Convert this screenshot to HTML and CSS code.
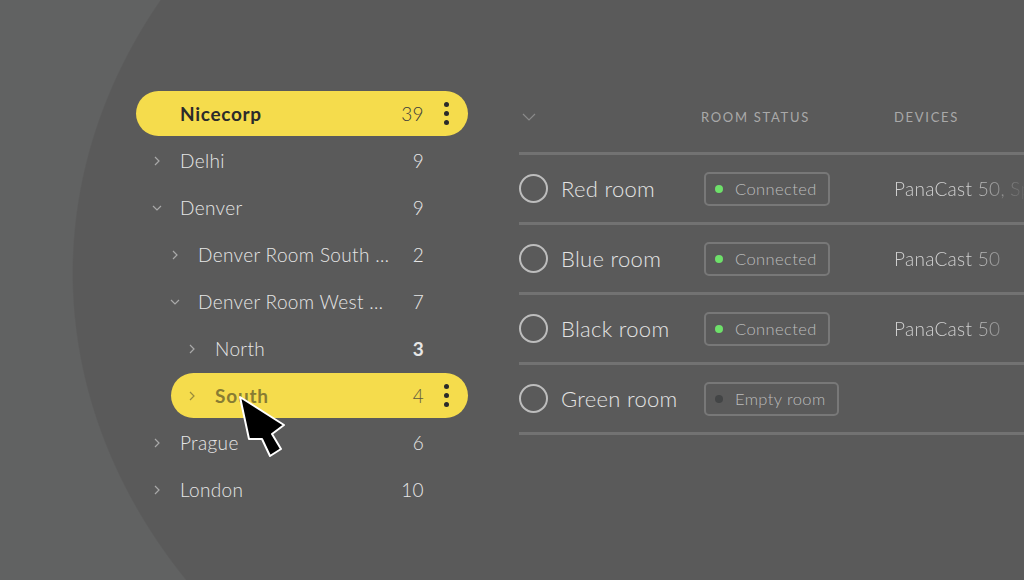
FILE: index.html
```html
<!DOCTYPE html>
<html lang="en">
<head>
    <meta charset="UTF-8">
    <meta name="viewport" content="width=device-width, initial-scale=1.0">
    <title>Rooms</title>
    <link rel="stylesheet" href="styles.css">
</head>
<body>
    <div class="page">
        <nav class="tree">
            <div class="node level-0 selected root">
                <span class="chev"></span>
                <span class="name">Nicecorp</span>
                <span class="count">39</span>
                <span class="more"><i></i><i></i><i></i></span>
            </div>
            <div class="node level-0">
                <span class="chev"><svg width="6" height="10" viewBox="0 0 6 10"><path d="M1 1l4 4-4 4"/></svg></span>
                <span class="name">Delhi</span>
                <span class="count">9</span>
                <span class="more"></span>
            </div>
            <div class="node level-0">
                <span class="chev"><svg width="10" height="6" viewBox="0 0 10 6"><path d="M1 1l4 4 4-4"/></svg></span>
                <span class="name">Denver</span>
                <span class="count">9</span>
                <span class="more"></span>
            </div>
            <div class="node level-1">
                <span class="chev"><svg width="6" height="10" viewBox="0 0 6 10"><path d="M1 1l4 4-4 4"/></svg></span>
                <span class="name">Denver Room South …</span>
                <span class="count">2</span>
                <span class="more"></span>
            </div>
            <div class="node level-1">
                <span class="chev"><svg width="10" height="6" viewBox="0 0 10 6"><path d="M1 1l4 4 4-4"/></svg></span>
                <span class="name">Denver Room West …</span>
                <span class="count">7</span>
                <span class="more"></span>
            </div>
            <div class="node level-2">
                <span class="chev"><svg width="6" height="10" viewBox="0 0 6 10"><path d="M1 1l4 4-4 4"/></svg></span>
                <span class="name">North</span>
                <span class="count strong">3</span>
                <span class="more"></span>
            </div>
            <div class="node level-2 selected hover">
                <span class="chev"><svg width="6" height="10" viewBox="0 0 6 10"><path d="M1 1l4 4-4 4"/></svg></span>
                <span class="name">South</span>
                <span class="count">4</span>
                <span class="more"><i></i><i></i><i></i></span>
            </div>
            <div class="node level-0">
                <span class="chev"><svg width="6" height="10" viewBox="0 0 6 10"><path d="M1 1l4 4-4 4"/></svg></span>
                <span class="name">Prague</span>
                <span class="count">6</span>
                <span class="more"></span>
            </div>
            <div class="node level-0">
                <span class="chev"><svg width="6" height="10" viewBox="0 0 6 10"><path d="M1 1l4 4-4 4"/></svg></span>
                <span class="name">London</span>
                <span class="count">10</span>
                <span class="more"></span>
            </div>
        </nav>

        <section class="rooms">
            <div class="rooms-head">
                <div class="col-name"><svg width="14" height="8" viewBox="0 0 14 8"><path d="M1 1l6 6 6-6"/></svg></div>
                <div class="col-status">ROOM STATUS</div>
                <div class="col-devices">DEVICES</div>
            </div>
            <div class="room">
                <div class="col-name"><span class="radio"></span>Red room</div>
                <div class="col-status"><span class="badge"><span class="dot on"></span>Connected</span></div>
                <div class="col-devices">PanaCast 50, Speak 750</div>
            </div>
            <div class="room">
                <div class="col-name"><span class="radio"></span>Blue room</div>
                <div class="col-status"><span class="badge"><span class="dot on"></span>Connected</span></div>
                <div class="col-devices">PanaCast 50</div>
            </div>
            <div class="room">
                <div class="col-name"><span class="radio"></span>Black room</div>
                <div class="col-status"><span class="badge"><span class="dot on"></span>Connected</span></div>
                <div class="col-devices">PanaCast 50</div>
            </div>
            <div class="room">
                <div class="col-name"><span class="radio"></span>Green room</div>
                <div class="col-status"><span class="badge"><span class="dot"></span>Empty room</span></div>
                <div class="col-devices"></div>
            </div>
        </section>

        <!-- mouse pointer over the South node -->
        <svg class="cursor" width="52" height="68" viewBox="-4 -4 52 68">
            <path d="M0 0L9 42L22 42L30 59L41 52L32 37L44 28Z"/>
        </svg>
    </div>
</body>
</html>
```

FILE: styles.css
```css
body {
    margin: 0;
    width: 1024px;
    height: 580px;
    overflow: hidden;
    font-family: Lato, "Open Sans", sans-serif;
    font-weight: 300;
    color: #e6e6e6;
    background: #616262 radial-gradient(ellipse 700px 563px at 772px 273px, #5a5a5a 99.8%, transparent 100%);
}
.page {
    position: relative;
    display: flex;
    align-items: flex-start;
    gap: 51px;
    padding: 91px 0 0 136px;
}

/* Location tree */
.tree {
    width: 332px;
    flex: none;
    display: flex;
    flex-direction: column;
    gap: 2px;
}
.node {
    display: flex;
    align-items: center;
    height: 45px;
    padding-left: 14px;
    border-radius: 23px;
    font-size: 19px;
    letter-spacing: 0.35px;
}
.node.level-1 {
    margin-left: 18px;
}
.node.level-2 {
    margin-left: 35px;
}
.chev {
    width: 14px;
    margin-right: 16px;
    display: flex;
    justify-content: center;
}
.chev svg path,
.col-name svg path {
    fill: none;
    stroke: #a9a9a9;
    stroke-width: 1.2;
}
.name {
    flex: 1;
    white-space: nowrap;
    overflow: hidden;
}
.count {
    text-align: right;
}
.count.strong {
    font-weight: 700;
}
.more {
    width: 44px;
    display: flex;
    flex-direction: column;
    align-items: center;
    gap: 4px;
}
.more i {
    width: 5px;
    height: 5px;
    border-radius: 50%;
    background-color: #2a2a2a;
}
.node.selected {
    background-color: #f5dc4c;
    color: #3c3c3c;
}
.node.root .name {
    font-weight: 700;
    letter-spacing: 0.7px;
    color: #2b2b2b;
}
.node.hover .name {
    font-weight: 700;
    letter-spacing: 0.8px;
    color: #887c33;
}
.node.hover .chev svg path {
    stroke: #998c3c;
}
.node.hover .count {
    color: #5e5a40;
}

/* Rooms table */
.rooms {
    width: 560px;
    flex: none;
}
.rooms-head,
.room {
    display: flex;
    align-items: center;
    box-sizing: border-box;
    border-bottom: 3px solid #727272;
}
.rooms-head {
    height: 64px;
    padding-bottom: 9px;
    font-size: 13px;
    font-weight: 400;
    letter-spacing: 1.7px;
    color: #a9a9a9;
}
.rooms-head .col-status {
    margin-left: -2px;
    margin-right: 2px;
}
.rooms-head svg {
    margin-left: 3px;
}
.rooms-head .col-name svg path {
    stroke: #8a8a8a;
}
.room {
    height: 70px;
}
.col-name {
    width: 184px;
    flex: none;
    display: flex;
    align-items: center;
}
.room .col-name {
    font-size: 22px;
    letter-spacing: 0.3px;
    color: #e4e4e4;
}
.col-status {
    width: 191px;
    flex: none;
}
.col-devices {
    flex: 1;
    white-space: nowrap;
    overflow: hidden;
}
.room .col-devices {
    font-size: 19px;
    letter-spacing: 0.3px;
    color: #d0d0d0;
    -webkit-mask-image: linear-gradient(90deg, #000 75px, transparent 135px);
    mask-image: linear-gradient(90deg, #000 75px, transparent 135px);
}
.radio {
    width: 25px;
    height: 25px;
    border: 2px solid #bdbdbd;
    border-radius: 50%;
    margin-right: 13px;
}
.badge {
    display: inline-flex;
    align-items: center;
    gap: 12px;
    box-sizing: border-box;
    height: 34px;
    padding: 0 11px 0 9px;
    margin-left: 1px;
    border: 2px solid #787878;
    border-radius: 5px;
    font-size: 16.5px;
    letter-spacing: 0.4px;
    color: #bcbcbc;
}
.dot {
    width: 8px;
    height: 8px;
    border-radius: 50%;
    background-color: #434546;
}
.dot.on {
    background-color: #6ee06a;
}

.cursor {
    position: absolute;
    left: 236px;
    top: 393px;
}
.cursor path {
    fill: #000;
    stroke: #fff;
    stroke-width: 2;
    stroke-linejoin: round;
}
```
